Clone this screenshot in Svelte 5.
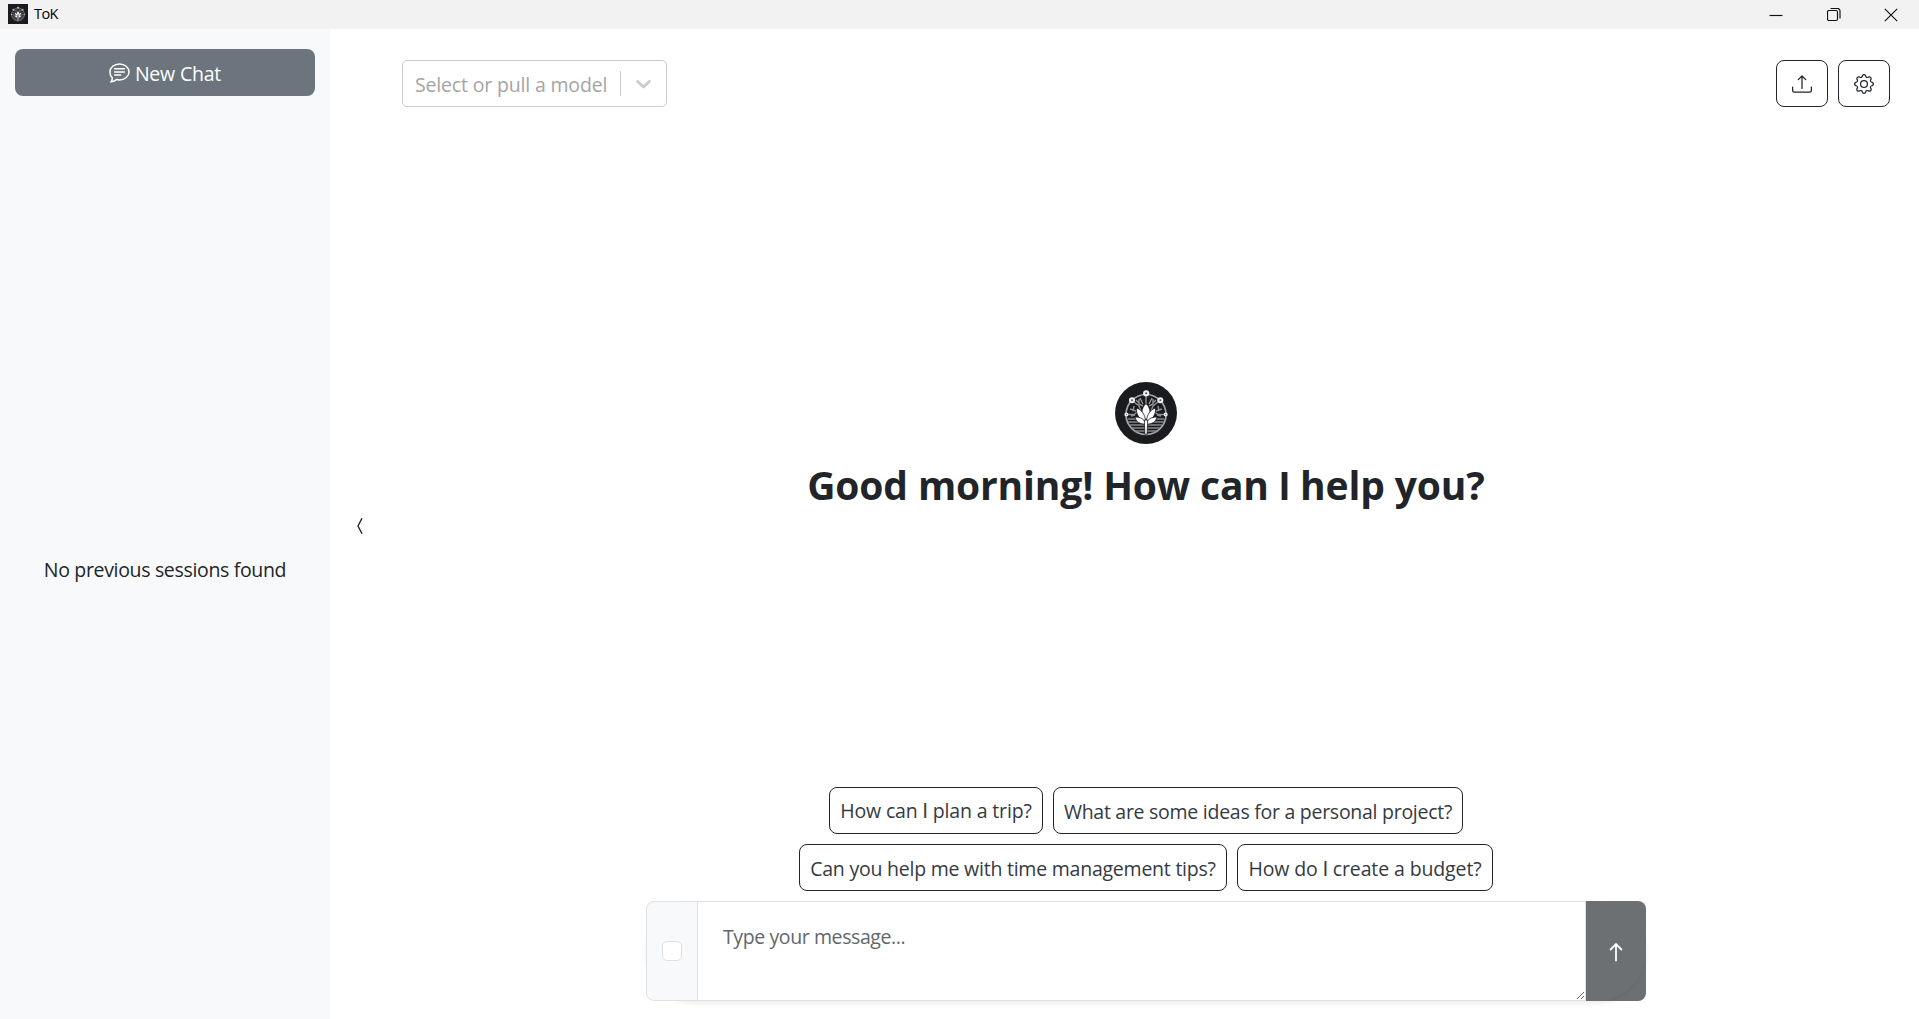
<script>
  const suggestionRows = [
    [
      { text: 'How can I plan a trip?', cls: 'trip' },
      { text: 'What are some ideas for a personal project?', cls: 'project' }
    ],
    [
      { text: 'Can you help me with time management tips?', cls: 'tips' },
      { text: 'How do I create a budget?', cls: 'budget' }
    ]
  ];
  let message = $state('');
</script>

<!-- The pronoun "I" is set in a face whose capital has no serifs. -->
{#snippet label(text)}<span>{#each text.split(/\b(I)\b/) as part}{#if part === 'I'}<span class="cap">I</span>{:else}{part}{/if}{/each}</span>{/snippet}

{#snippet emblem()}
  <svg viewBox="0 0 62 62" class="emblem">
    <rect width="62" height="62" fill="#191b1e" />
    <g fill="none" stroke="#a0a2a5">
      <circle cx="31" cy="32.500" r="20" stroke-width="1.700" />
      <path d="M13 37h36M13 40h36M15 43h32M17 46h28M20 49h22" stroke="#85878b" stroke-width="1.300" />
      <path d="M31 14v8M25 16l3 6M37 16l-3 6M19 20l5 4 2 5M43 20l-5 4-2 5M13 32.500h6l4-3M49 32.500h-6l-4-3M15 27l6 2M47 27l-6 2M24 17v5l4 2M38 17v5l-4 2M21 18l3 3M41 18l-3 3M16 34l4-1M46 34l-4-1M19 24l-1 5M43 24l1 5" stroke="#8d8f93" stroke-width="1.400" />
    </g>
    <g fill="#55575a" stroke="#eee" stroke-width="2.100">
      <circle cx="31.200" cy="11.300" r="2.100" />
      <circle cx="17" cy="18.200" r="2" />
      <circle cx="45.300" cy="18.200" r="2" />
      <circle cx="11.400" cy="32.500" r="1.300" stroke-width="1.500" />
      <circle cx="50.700" cy="32.500" r="1.300" stroke-width="1.500" />
    </g>
    <g fill="#fff" stroke="#191b1e" stroke-width=".8">
      <path d="M31 21.500c5.500 5.500 5 11 0 16.500-5-5.500-5.500-11 0-16.500z" />
      <path d="M21.500 26c5 1.800 8.500 6 9 13-6-1.500-9.500-6-9-13zM40.500 26c-5 1.800-8.500 6-9 13 6-1.500 9.500-6 9-13z" />
      <path d="M20 35c6 0 10 2.500 10.500 7-5 .5-9.500-2-10.500-7zM42 35c-6 0-10 2.500-10.500 7 5 .5 9.500-2 10.500-7z" />
      <path d="M29.300 38h3.400l-.5 13-1.200 3.500-1.200-3.500z" />
    </g>
  </svg>
{/snippet}

<div class="window">
  <header class="titlebar">
    <div class="app-icon">{@render emblem()}</div>
    <span class="app-name">ToK</span>
    <div class="controls">
      <svg width="14" height="14" viewBox="0 0 14 14"><path d="M.5 7.500h13" /></svg>
      <svg width="14" height="14" viewBox="0 0 14 14"><rect x=".5" y="2.500" width="10" height="10" rx="1.500" /><path d="M3.500.5h7a2.500 2.500 0 0 1 2.500 2.500v7.500" /></svg>
      <svg width="14" height="14" viewBox="0 0 14 14"><path d="m.8.800 12.400 12.400m0-12.400L.8 13.200" /></svg>
    </div>
  </header>

  <div class="body">
    <aside>
      <button class="new-chat">
        <svg width="21" height="20" viewBox="0 0 21 20">
          <path d="M10.500.9c5.300 0 9.500 3.600 9.500 8s-4.200 8-9.500 8c-1 0-2-.1-2.900-.4-1.100 1.200-2.900 2-5.500 2.300.8-1.300 1.300-2.700 1.200-4.100C1.700 13.200.9 11.200.9 8.900c0-4.400 4.300-8 9.600-8z" />
          <path d="M5.600 5.700h9.800M5.600 8.900h9.800M5.600 12.100h6" stroke-linecap="round" />
        </svg>
        <span>New Chat</span>
      </button>
      <div class="sessions"><p>No previous sessions found</p></div>
    </aside>

    <div class="handle">
      <svg width="8" height="18" viewBox="0 0 8 18"><path d="M6 1.200 2 9l4 7.800" /></svg>
    </div>

    <main>
      <div class="toolbar">
        <div class="select">
          <span>Select or pull a model</span>
          <i></i>
          <svg width="25" height="25" viewBox="0 0 20 20"><path d="M4.516 7.548c0.436-0.446 1.043-0.481 1.576 0l3.908 3.747 3.908-3.747c0.533-0.481 1.141-0.446 1.574 0 0.436 0.445 0.408 1.197 0 1.615-0.406 0.418-4.695 4.502-4.695 4.502-0.217 0.223-0.502 0.335-0.787 0.335s-0.570-0.112-0.789-0.335c0 0-4.287-4.084-4.695-4.502s-0.436-1.170 0-1.615z" /></svg>
        </div>
        <div class="actions">
          <button aria-label="Export">
            <svg width="20" height="20" viewBox="0 0 16 16"><path d="M.5 9.900a.5.5 0 0 1 .5.5v2.500a1 1 0 0 0 1 1h12a1 1 0 0 0 1-1v-2.500a.5.5 0 0 1 1 0v2.500a2 2 0 0 1-2 2H2a2 2 0 0 1-2-2v-2.500a.5.5 0 0 1 .5-.5" /><path d="M7.646 1.146a.5.5 0 0 1 .708 0l3 3a.5.5 0 0 1-.708.708L8.500 2.707V11.500a.5.5 0 0 1-1 0V2.707L5.354 4.854a.5.5 0 1 1-.708-.708z" /></svg>
          </button>
          <button aria-label="Settings">
            <svg width="20" height="20" viewBox="0 0 16 16"><path d="M8 4.754a3.246 3.246 0 1 0 0 6.492 3.246 3.246 0 0 0 0-6.492M5.754 8a2.246 2.246 0 1 1 4.492 0 2.246 2.246 0 0 1-4.492 0" /><path d="M9.796 1.343c-.527-1.790-3.065-1.790-3.592 0l-.094.319a.873.873 0 0 1-1.255.52l-.292-.16c-1.640-.892-3.433.902-2.540 2.541l.159.292a.873.873 0 0 1-.52 1.255l-.319.094c-1.790.527-1.790 3.065 0 3.592l.319.094a.873.873 0 0 1 .52 1.255l-.16.292c-.892 1.640.901 3.434 2.541 2.540l.292-.159a.873.873 0 0 1 1.255.52l.094.319c.527 1.790 3.065 1.790 3.592 0l.094-.319a.873.873 0 0 1 1.255-.52l.292.16c1.640.893 3.434-.902 2.540-2.541l-.159-.292a.873.873 0 0 1 .52-1.255l.319-.094c1.790-.527 1.790-3.065 0-3.592l-.319-.094a.873.873 0 0 1-.52-1.255l.16-.292c.893-1.640-.902-3.433-2.541-2.540l-.292.159a.873.873 0 0 1-1.255-.52zm-2.633.283c.246-.835 1.428-.835 1.674 0l.094.319a1.873 1.873 0 0 0 2.693 1.115l.291-.16c.764-.415 1.600.42 1.184 1.185l-.159.292a1.873 1.873 0 0 0 1.116 2.692l.318.094c.835.246.835 1.428 0 1.674l-.319.094a1.873 1.873 0 0 0-1.115 2.693l.16.291c.415.764-.42 1.600-1.185 1.184l-.291-.159a1.873 1.873 0 0 0-2.693 1.116l-.094.318c-.246.835-1.428.835-1.674 0l-.094-.319a1.873 1.873 0 0 0-2.692-1.115l-.292.16c-.764.415-1.600-.42-1.184-1.185l.159-.291A1.873 1.873 0 0 0 1.945 8.930l-.319-.094c-.835-.246-.835-1.428 0-1.674l.319-.094A1.873 1.873 0 0 0 3.060 4.377l-.16-.292c-.415-.764.42-1.600 1.185-1.184l.292.159a1.873 1.873 0 0 0 2.692-1.115z" /></svg>
          </button>
        </div>
      </div>

      <section class="welcome">
        <div class="logo">{@render emblem()}</div>
        <h1>{@render label('Good morning! How can I help you?')}</h1>
      </section>

      <div class="suggestions">
        {#each suggestionRows as row}
          <div class="row">
            {#each row as item}
              <button class={item.cls}>{@render label(item.text)}</button>
            {/each}
          </div>
        {/each}
      </div>

      <form class="composer">
        <div class="attach"><input type="checkbox" aria-label="Attach" /></div>
        <textarea placeholder="Type your message..." bind:value={message}></textarea>
        <button type="button" class="send" aria-label="Send">
          <svg width="20" height="20" viewBox="0 0 20 20"><path d="M10 18.500V2.500M4.600 7.500 10 2.100l5.400 5.400" /></svg>
        </button>
      </form>
    </main>
  </div>
</div>

<style>
  :global(body) { margin: 0; background: #fff; }
  .window {
    display: flex; flex-direction: column; width: 100%; height: 100vh; overflow: hidden;
    color: #212529; font-family: 'Open Sans', 'Noto Sans', sans-serif; font-size: 19.500px; line-height: 30px;
  }
  .window * { box-sizing: border-box; }
  button, textarea { font: inherit; color: inherit; margin: 0; }
  span, p { white-space: pre; }
  .cap { font-family: Roboto, sans-serif; line-height: 1; }
  .emblem { display: block; width: 100%; height: 100%; }

  .titlebar { display: flex; align-items: center; flex: none; height: 29px; padding-left: 8px; background: #f2f2f2; color: #000; }
  .app-icon { width: 20px; height: 20px; margin-top: -1px; }
  .app-name { margin: -1px 0 0 6px; font-size: 14.500px; letter-spacing: -.6px; }
  .controls { display: flex; gap: 43.500px; margin-left: auto; padding-right: 21px; }
  .controls svg { fill: none; stroke: #111; stroke-width: 1.150; }

  .body { display: flex; flex: 1; min-height: 0; }
  aside { display: flex; flex-direction: column; flex: none; width: 330px; padding: 20px 15px; background: #f8f9fb; }
  .new-chat {
    display: flex; align-items: center; justify-content: center; gap: 5px; flex: none;
    height: 47px; padding: 0; border: 0; border-radius: 8px; background: #6c757d; color: #fff;
  }
  .new-chat svg { margin-top: 1px; fill: none; stroke: #fff; stroke-width: 1.500; }
  .new-chat span { padding-top: 3px; letter-spacing: -.2px; }
  .sessions { display: flex; align-items: center; justify-content: center; flex: 1; padding-top: 45px; }
  p { margin: 0; letter-spacing: -.33px; }
  .handle { display: flex; align-items: center; justify-content: center; flex: none; width: 60px; padding-top: 4px; }
  .handle svg { fill: none; stroke: #212529; stroke-width: 1.400; }

  main { display: flex; flex-direction: column; align-items: center; flex: 1; padding: 31px 29px 18px 12px; }
  .toolbar { display: flex; justify-content: space-between; flex: none; width: 100%; }
  .select { display: flex; align-items: center; width: 265px; height: 47px; padding-left: 12px; border: 1px solid #ccc; border-radius: 5px; color: #a4a4a4; }
  .select span { width: 205px; padding-top: 2px; letter-spacing: -.17px; }
  .select i { width: 1px; height: 25px; background: #ccc; }
  .select svg { margin-left: 10px; fill: #ccc; }
  .actions { display: flex; gap: 10px; }
  .actions button { display: flex; align-items: center; justify-content: center; width: 52px; height: 47px; padding: 0; border: 1px solid #212529; border-radius: 8px; background: #fff; }
  .actions svg { fill: #212529; }

  .welcome { display: flex; flex-direction: column; align-items: center; flex: 1; width: 1000px; padding-top: 275px; }
  .logo { flex: none; width: 62px; height: 62px; border-radius: 50%; overflow: hidden; }
  h1 { margin: 17px 0 0; font-size: 39px; line-height: 48px; font-weight: 700; letter-spacing: -.15px; }

  .suggestions { display: flex; flex-direction: column; gap: 10px; margin-bottom: 10px; }
  .row { display: flex; justify-content: center; gap: 10px; }
  .row button { display: flex; align-items: center; justify-content: center; height: 47px; padding: 2px 0 0; border: 1px solid #212529; border-radius: 8px; background: #fff; color: #343a3f; }
  .row .trip { width: 214px; padding-top: 0; letter-spacing: -.14px; }
  .row .project { width: 410px; letter-spacing: -.27px; }
  .row .tips { width: 428px; letter-spacing: -.23px; }
  .row .budget { width: 256px; letter-spacing: -.12px; }

  .composer { display: flex; flex: none; width: 1000px; height: 100px; border-radius: 50px; box-shadow: 0 2.500px 5px rgba(0, 0, 0, .075); }
  .attach { display: flex; align-items: center; justify-content: center; width: 52px; border: 1px solid #dee2e6; border-radius: 8px 0 0 8px; background: #f8f9fa; }
  .attach input { appearance: none; width: 20px; height: 20px; margin: 0; border: 1px solid #dee2e6; border-radius: 5px; background: #fff; }
  textarea { width: 889px; margin-left: -1px; padding: 20px 25px; border: 1px solid #dee2e6; background: #fff; outline: 0; resize: both; letter-spacing: -.4px; }
  textarea::placeholder { color: #62676b; opacity: 1; }
  .send { display: flex; align-items: center; justify-content: center; width: 60px; padding: 1px 0 0; border: 0; border-radius: 0 8px 8px 0; background: #1e2529; opacity: .65; }
  .send svg { fill: none; stroke: #fff; stroke-width: 1.800; stroke-linecap: round; }
</style>
